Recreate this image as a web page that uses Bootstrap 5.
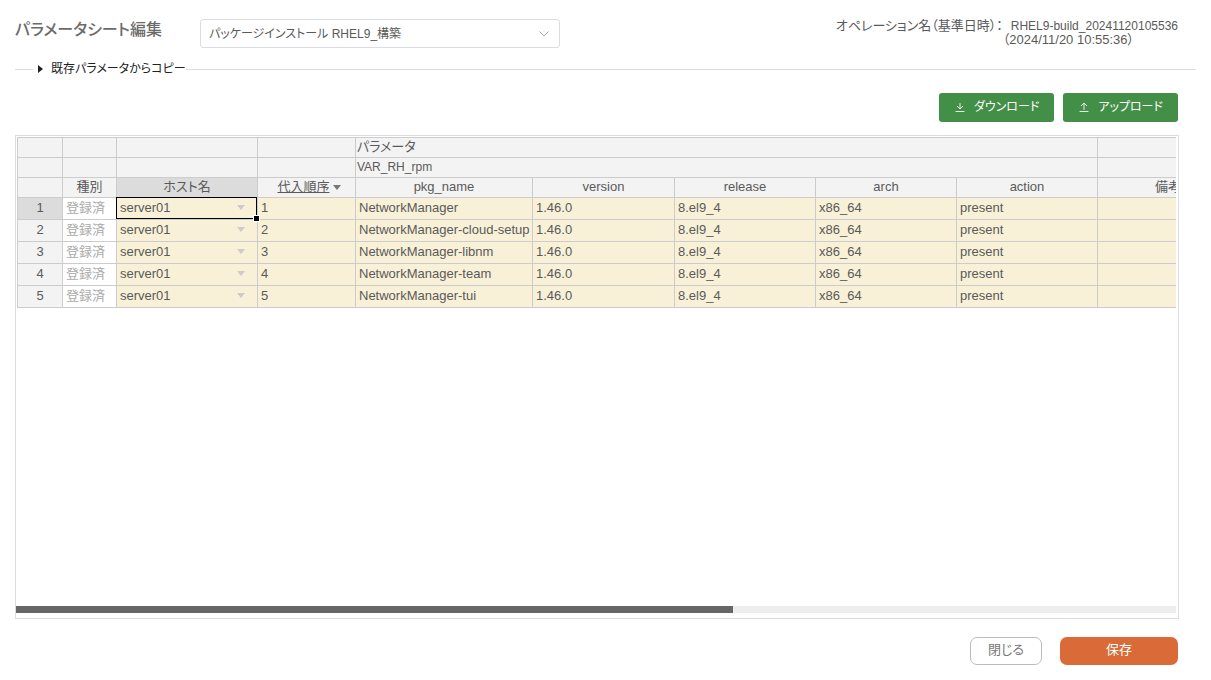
<!DOCTYPE html>
<html lang="ja">
<head>
<meta charset="utf-8">
<meta name="viewport" content="width=device-width, initial-scale=1">
<title>パラメータシート編集</title>
<link href="https://cdn.jsdelivr.net/npm/bootstrap@5.3.0/dist/css/bootstrap.min.css" rel="stylesheet">
<style>
  body { font-family: "Liberation Sans", "Noto Sans CJK JP", sans-serif; font-size: 13px; line-height: 16px; color: #5a5a5a; }
  body, button, select { font-feature-settings: "palt"; }
  .page-title { font-size: 16px; line-height: 22px; font-weight: 500; color: #6b6b6b; width: 185px; padding-top: 19px; }
  .menu-select { width: 360px; height: 29px; margin-top: 19px; padding: 0 32px 0 8px; font-size: 12px; color: #5a5a5a; border-color: #dcdce4; border-radius: 3px;
    background-image: url("data:image/svg+xml,%3Csvg xmlns='http://www.w3.org/2000/svg' viewBox='0 0 10 6'%3E%3Cpath d='M.5.5 5 5 9.5.5' fill='none' stroke='%23aaa'/%3E%3C/svg%3E");
    background-size: 10px 6px; background-position: right 10px center; }
  .op-info { line-height: 14px; padding-top: 19px; margin-right: 18px; }
  .op-name { font-size: 12px; padding-left: 8px; }
  .app-head { padding: 0 15px; height: 61px; }
  .copy-row { padding: 0 15px; }
  .rule { height: 1px; background: #dcdce4; }
  .rule-lead { width: 18px; }
  .copy-toggle { color: #222; font-size: 12px; line-height: 16px; gap: 8px; }
  .tools { padding: 16px 33px 13px 15px; gap: 9px; }
  .btn-io { height: 29px; font-size: 12px; line-height: 16px; padding: 0 15px 2px; border: 0; border-radius: 3px; background: #438f47; color: #fff; gap: 8px; --bs-btn-hover-color: #fff; }
  .btn-io svg { opacity: .85; }
  .sheet-box { margin: 0 32px 0 15px; border: 1px solid #dcdce4; padding: 1px 2px 5px 0; min-height: 200px; }
  .sheet-view { overflow: hidden; padding-left: 1px; }
  .sheet { width: 1222px; table-layout: fixed; border-collapse: collapse; }
  .sheet th, .sheet td { border: 1px solid #ccc; padding: 0 3px; white-space: nowrap; overflow: hidden; font-weight: 400; }
  .sheet thead th { height: 20px; padding-bottom: 2px; background: #f3f3f3; text-align: center; }
  .sheet thead th.group { text-align: left; padding: 0 1px 2px; }
  .sheet thead th.subgroup { font-size: 12px; }
  .sheet tbody td, .sheet tbody th { height: 22px; padding-bottom: 2px; background: #f8f1d8; }
  .sheet tbody th { background: #f3f3f3; text-align: center; }
  .sheet tbody td.kind { background: #fff; color: #aaa; }
  .sheet .picked { background: #dcdcdc !important; }
  .sheet td.current { position: relative; overflow: visible; }
  .current::before { content: ""; position: absolute; inset: -1px 0 0 -1px; border: 1px solid #000; }
  .current::after { content: ""; position: absolute; right: -3px; bottom: -3px; width: 7px; height: 7px; background: #000; border: 1px solid #fff; z-index: 1; }
  .tri { border: 4px solid transparent; border-top: 5px solid #ccc; border-bottom: 0; margin-right: 9px; }
  .tri-sort { display: inline-block; border-top-color: #777; margin: 0 0 1px 3px; }
  .track { height: 7px; background: #ededed; }
  .thumb { height: 7px; background: #666; }
  .foot { padding: 18px 33px 15px; gap: 18px; }
  .foot .btn { height: 28px; font-size: 13px; line-height: 16px; padding: 0 0 2px; border-radius: 7px; }
  .foot .btn-shut { width: 72px; background: #fff; border: 1px solid #bbb; color: #777; }
  .foot .btn-keep { width: 118px; background: #da6a37; color: #fff; border: 0; }
</style>
</head>
<body class="bg-white">
<div class="d-flex flex-column min-vh-100">
  <header class="app-head d-flex align-items-start">
    <h1 class="page-title mb-0">パラメータシート編集</h1>
    <select class="form-select menu-select" aria-label="メニュー">
      <option>パッケージインストール RHEL9_構築</option>
    </select>
    <div class="op-info d-flex ms-auto text-nowrap">
      <div>オペレーション名（基準日時）：</div>
      <div><div class="op-name">RHEL9-build_20241120105536</div><div>（2024/11/20 10:55:36）</div></div>
    </div>
  </header>

  <div class="copy-row d-flex align-items-center">
    <div class="rule rule-lead"></div>
    <button type="button" class="copy-toggle btn border-0 d-flex align-items-center py-0 ps-1 pe-0" aria-expanded="false">
      <svg width="6" height="8" viewBox="0 0 6 8" aria-hidden="true"><path d="M1 0 6 4 1 8Z" fill="#222"/></svg>
      既存パラメータからコピー
    </button>
    <div class="rule flex-grow-1"></div>
  </div>

  <div class="tools d-flex justify-content-end">
    <button type="button" class="btn btn-io d-flex align-items-center">
      <svg width="12" height="12" viewBox="0 0 12 12" fill="none" stroke="#fff" aria-hidden="true"><path d="M6 2v6M3 5l3 3 3-3M1.500 10.500h9"/></svg>
      ダウンロード
    </button>
    <button type="button" class="btn btn-io d-flex align-items-center">
      <svg width="12" height="12" viewBox="0 0 12 12" fill="none" stroke="#fff" aria-hidden="true"><path d="M6 9V2M3 5l3-3 3 3M1.500 10.500h9"/></svg>
      アップロード
    </button>
  </div>

  <main class="sheet-box d-flex flex-column flex-grow-1">
    <div class="sheet-view flex-grow-1">
      <table class="sheet">
        <colgroup>
          <col style="width:45px"><col style="width:54px"><col style="width:141px"><col style="width:98px"><col style="width:177px"><col style="width:142px"><col style="width:141px"><col style="width:141px"><col style="width:141px"><col style="width:141px">
        </colgroup>
        <thead>
          <tr><th></th><th></th><th></th><th></th><th class="group" colspan="5">パラメータ</th><th></th></tr>
          <tr><th></th><th></th><th></th><th></th><th class="group subgroup" colspan="5">VAR_RH_rpm</th><th></th></tr>
          <tr><th></th><th>種別</th><th class="picked">ホスト名</th><th class="ps-2"><u>代入順序</u><span class="tri tri-sort"></span></th><th>pkg_name</th><th>version</th><th>release</th><th>arch</th><th>action</th><th>備考</th></tr>
        </thead>
        <tbody>
          <tr><th class="picked">1</th><td class="kind">登録済</td><td class="current"><div class="d-flex align-items-center justify-content-between">server01<span class="tri"></span></div></td><td>1</td><td>NetworkManager</td><td>1.46.0</td><td>8.el9_4</td><td>x86_64</td><td>present</td><td></td></tr>
          <tr><th>2</th><td class="kind">登録済</td><td><div class="d-flex align-items-center justify-content-between">server01<span class="tri"></span></div></td><td>2</td><td>NetworkManager-cloud-setup</td><td>1.46.0</td><td>8.el9_4</td><td>x86_64</td><td>present</td><td></td></tr>
          <tr><th>3</th><td class="kind">登録済</td><td><div class="d-flex align-items-center justify-content-between">server01<span class="tri"></span></div></td><td>3</td><td>NetworkManager-libnm</td><td>1.46.0</td><td>8.el9_4</td><td>x86_64</td><td>present</td><td></td></tr>
          <tr><th>4</th><td class="kind">登録済</td><td><div class="d-flex align-items-center justify-content-between">server01<span class="tri"></span></div></td><td>4</td><td>NetworkManager-team</td><td>1.46.0</td><td>8.el9_4</td><td>x86_64</td><td>present</td><td></td></tr>
          <tr><th>5</th><td class="kind">登録済</td><td><div class="d-flex align-items-center justify-content-between">server01<span class="tri"></span></div></td><td>5</td><td>NetworkManager-tui</td><td>1.46.0</td><td>8.el9_4</td><td>x86_64</td><td>present</td><td></td></tr>
        </tbody>
      </table>
    </div>
    <div class="track"><div class="thumb" style="width:61.8%"></div></div>
  </main>

  <footer class="foot d-flex justify-content-end">
    <button type="button" class="btn btn-shut">閉じる</button>
    <button type="button" class="btn btn-keep">保存</button>
  </footer>
</div>
<script src="https://cdn.jsdelivr.net/npm/bootstrap@5.3.0/dist/js/bootstrap.bundle.min.js"></script>
</body>
</html>
